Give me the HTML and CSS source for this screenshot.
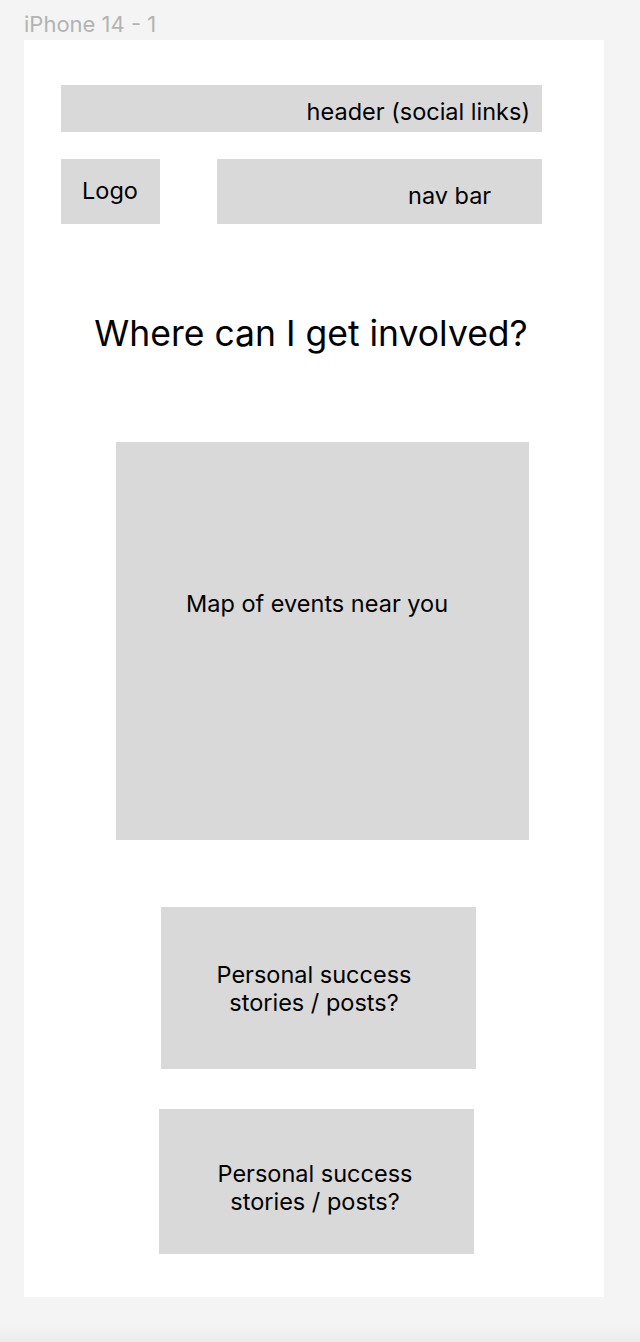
FILE: index.html
```html
<!DOCTYPE html>
<html lang="en">
<head>
    <meta charset="UTF-8">
    <meta name="viewport" content="width=device-width, initial-scale=1.0">
    <title>iPhone 14 - 1</title>
    <link rel="stylesheet" href="styles.css">
</head>
<body>
    <div class="frame-label">iPhone 14 - 1</div>

    <div class="frame">
        <!-- Header -->
        <div class="box header-bar">header (social links)</div>

        <div class="top-row">
            <div class="box logo-box">Logo</div>
            <div class="box nav-box">nav bar</div>
        </div>

        <h1 class="title">Where can I get involved?</h1>

        <!-- Map -->
        <div class="box map-box">Map of events near you</div>

        <!-- Posts -->
        <div class="box post-box post-one">Personal success<br>stories / posts?</div>
        <div class="box post-box post-two">Personal success<br>stories / posts?</div>
    </div>
</body>
</html>
```

FILE: styles.css
```css
body {
    font-family: Inter, "Noto Sans", sans-serif;
    background-color: #f4f4f4;
    color: #000000;
    margin: 0;
    padding: 0;
    height: 1342px;
    background-image: linear-gradient(to bottom, #f4f4f4 1325px, #ebebeb 1342px);
}

.frame-label {
    height: 40px;
    padding-left: 24px;
    font-size: 22px;
    line-height: 48px;
    color: #b3b3b3;
    box-sizing: border-box;
    overflow: hidden;
}

.frame {
    background-color: #ffffff;
    width: 580px;
    margin-left: 24px;
    padding-top: 45px;
    padding-bottom: 43px;
}

.box {
    background-color: #d9d9d9;
    font-size: 23.5px;
    box-sizing: border-box;
}

.header-bar {
    margin-left: 37px;
    width: 481px;
    height: 47px;
    padding-right: 12px;
    text-align: right;
    line-height: 53px;
}

.top-row {
    display: flex;
    gap: 57px;
    margin-left: 37px;
    margin-top: 27px;
}

.logo-box {
    width: 99px;
    height: 65px;
    padding-left: 21px;
    line-height: 63px;
}

.nav-box {
    width: 325px;
    height: 65px;
    padding-left: 191px;
    line-height: 74px;
}

.title {
    margin: 90px 0 0 0;
    font-size: 35.5px;
    font-weight: 400;
    line-height: 40px;
    text-align: center;
    padding-right: 6px;
}

.map-box {
    margin: 88px 0 0 92px;
    width: 413px;
    height: 398px;
    padding-left: 70px;
    padding-top: 148px;
    line-height: 28px;
}

.post-box {
    width: 315px;
    display: flex;
    align-items: center;
    justify-content: center;
    text-align: center;
    line-height: 28px;
    padding-right: 9px;
}

.post-one {
    margin: 67px 0 0 137px;
    height: 162px;
    padding-top: 2px;
}

.post-two {
    margin: 40px 0 0 135px;
    height: 145px;
    padding-top: 13px;
    padding-right: 3px;
}
```
